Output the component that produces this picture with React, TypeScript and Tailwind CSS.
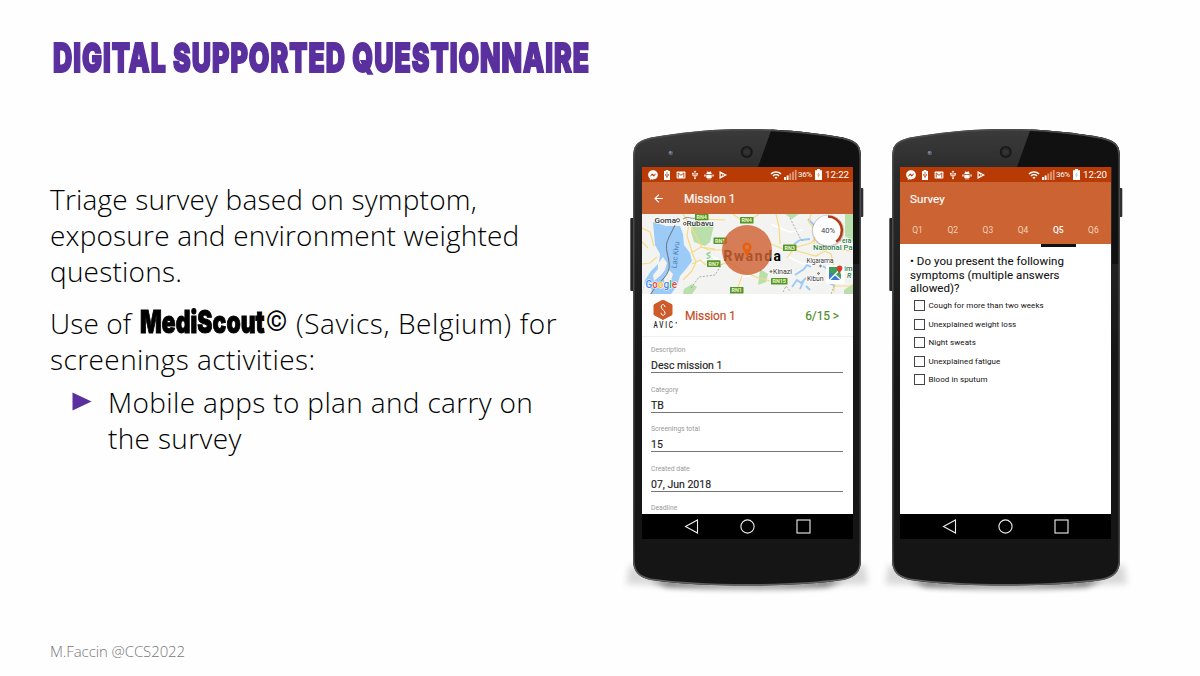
import React from "react";
import { FaFacebookMessenger } from "react-icons/fa";
import { MdUsb, MdWifi, MdArrowBack } from "react-icons/md";

function StatusBar({ time, charge }: { time: string; charge: string }) {
  return (
    <div className="flex h-[15px] shrink-0 items-center justify-between bg-[#b83a05] pl-[6px] pr-[4px] text-white">
      <div className="flex items-center gap-[4px]">
        <FaFacebookMessenger className="size-[10px]" />
        <svg className="size-[10px]" viewBox="0 0 10 10">
          <path d="M3.7 0h2.6v1H8v9H2V1h1.7z" fill="#fff" />
          <path d="M5 2v6M3.5 4v1.5L5 6.500l1.500-1V4" stroke="#b83a05" strokeWidth=".7" fill="none" />
        </svg>
        <svg className="size-[10px]" viewBox="0 0 10 10">
          <rect x=".6" y="1.400" width="8.800" height="7.200" rx=".8" fill="#fff" />
          <path d="M2.200 7.600V3L5 5.300 7.800 3V7.600" stroke="#b83a05" strokeWidth=".9" fill="none" />
        </svg>
        <MdUsb className="size-[10px]" />
        <svg className="size-[10px]" viewBox="0 0 10 10" fill="#fff">
          <path d="M2.300 4.300a2.700 2.500 0 015.400 0zM2.300 4.900h5.400v3H6.500v1.600H5.500V7.900h-1v1.600h-1V7.900H2.300zM.3 4.600h1.300v2H.3zM8.400 4.600h1.300v2H8.400z" />
          <path d="M3.200.9l.8 1.300M6.800.9L6 2.200" stroke="#fff" strokeWidth=".5" />
        </svg>
        <svg className="size-[10px]" viewBox="0 0 10 10">
          <path d="M1.500 1l7.500 4-7.500 4z" fill="#fff" />
          <path d="M2.700 3.200v3.600L5 5z" fill="#b83a05" />
          <path d="M5 5l1.500 1.400M5 5l1.500-1.400" stroke="#b83a05" strokeWidth=".5" />
        </svg>
      </div>
      <div className="flex items-center">
        <MdWifi className="size-[12px]" />
        <svg className="ml-[2px] h-[10px] w-[13px]" viewBox="0 0 13 10">
          <path d="M1 10V7M3.600 10V5.500" stroke="#fff" strokeWidth="1.900" />
          <path d="M6.300 10V3.500M9 10V1.700M11.700 10V0" stroke="#dd9878" strokeWidth="1.800" />
        </svg>
        <span className="ml-[1px] w-[15px] text-[8px] leading-none tracking-[-0.400px]">36%</span>
        <svg className="ml-[2px] h-[11px] w-[7px]" viewBox="0 0 7 11">
          <path d="M2 0h3v1.200h2V11H0V1.200h2z" fill="#fff" />
          <path d="M4.400 3L2 6.200h1.500L2.800 9 5 5.700H3.600z" fill={charge} />
        </svg>
        <span className="ml-[3px] text-[9.800px] leading-none tracking-[-0.100px]">{time}</span>
      </div>
    </div>
  );
}

function NavBar() {
  return (
    <div className="flex h-[25px] shrink-0 items-center justify-center gap-[41px] bg-black">
      <svg className="size-[15px]" viewBox="0 0 15 15" fill="none" stroke="#eee" strokeWidth="1.100">
        <path d="M13.500 1v13L1.500 7.500z" />
      </svg>
      <svg className="size-[15px]" viewBox="0 0 15 15" fill="none" stroke="#eee" strokeWidth="1.100">
        <circle cx="7.500" cy="7.500" r="6.600" />
      </svg>
      <svg className="size-[15px]" viewBox="0 0 15 15" fill="none" stroke="#eee" strokeWidth="1.100">
        <rect x="1" y="1" width="13" height="13" />
      </svg>
    </div>
  );
}

function PhoneBody({ id }: { id: string }) {
  const outline =
    "M6 36C6 21 9 17.500 24 13.500C58 7.500 90 5 120 5S182 7.500 216 13.500C231 17.500 234 21 234 36V436C234 448 228 453.500 216 456C185 460.500 150 461.500 120 461.500S55 460.500 24 456C12 453.500 6 448 6 436Z";
  return (
    <svg className="absolute inset-0 h-full w-full" viewBox="0 0 240 476" overflow="visible">
      <defs>
        <linearGradient id={id + "g"} x1="0" y1="0" x2="0" y2="1">
          <stop offset="0" stopColor="#3b3b3b" />
          <stop offset=".1" stopColor="#2b2b2b" />
          <stop offset=".5" stopColor="#171717" />
          <stop offset="1" stopColor="#151515" />
        </linearGradient>
        <linearGradient id={id + "e"} x1="0" y1="0" x2="0" y2="1">
          <stop offset="0" stopColor="#4c4c4c" />
          <stop offset=".9" stopColor="#444" />
          <stop offset="1" stopColor="#606060" />
        </linearGradient>
        <clipPath id={id + "c"}>
          <path d={outline} />
        </clipPath>
        <filter id={id + "b"} x="-20%" y="-100%" width="140%" height="300%">
          <feGaussianBlur stdDeviation="3" />
        </filter>
      </defs>
      <path d="M3 440C30 455 210 455 238 440L241 460Q120 465 -1 460Z" fill="#777" opacity=".28" filter={"url(#" + id + "b)"} />
      <path d="M24 456Q120 467 216 456L200 462Q120 466 40 462Z" fill="#111" opacity=".75" filter={"url(#" + id + "b)"} />
      <rect x="3.300" y="94" width="4" height="73" rx="1" fill="#252525" />
      <rect x="233" y="64" width="3.300" height="29" rx="1" fill="#303030" />
      <path d={outline} fill={"url(#" + id + "g)"} />
      <g clipPath={"url(#" + id + "c)"}>
        <path d="M146.500 0H240V140H226V43H131Z" fill="#111" />
        <path d={outline} fill="none" stroke={"url(#" + id + "e)"} strokeWidth="3" />
      </g>
      <circle cx="119.700" cy="28" r="5.300" fill="#262626" stroke="#161616" strokeWidth="1.300" />
      <circle cx="119.700" cy="28" r="3" fill="#333" />
      <circle cx="43.700" cy="29" r="2.300" fill="#59606e" />
      <circle cx="43.200" cy="28.300" r="1" fill="#8b93a8" />
    </svg>
  );
}

function Phone({ id, inset, children }: { id: string; inset: string; children: React.ReactNode }) {
  return (
    <div className={"relative h-[476px] w-[240px] shrink-0 pt-[43px] " + inset}>
      <PhoneBody id={id} />
      <div className="relative flex h-[372px] w-[211px] flex-col overflow-hidden bg-white font-[Roboto,sans-serif]">
        {children}
        <NavBar />
      </div>
    </div>
  );
}

function RoadTag({ x, y, t }: { x: number; y: number; t: string }) {
  const w = t.length > 3 ? 16.5 : 13.5;
  return (
    <g>
      <rect x={x} y={y} width={w} height="6.600" rx=".5" fill="#55962b" />
      <text x={x + w / 2} y={y + 5.3} fontSize="5.400" fontWeight="700" fill="#f4f7c8" textAnchor="middle">
        {t}
      </text>
    </g>
  );
}

function RwandaMap() {
  return (
    <svg className="h-[80px] w-[211px] shrink-0" viewBox="0 0 211 80" fontFamily="Roboto, sans-serif">
      <rect width="211" height="80" fill="#f3f4f2" />
      <path d="M50 8L57 5 72 11 68 28 63 32 52 28 49 18ZM42 75L50 70 55 73 50 80H41ZM143 0H157L150 5ZM203 0H211V28L203 22ZM202 76L211 70V80H202ZM118 55l8 5-2 8-8 3z" fill="#b9dfaa" />
      <path d="M11 8L24 12 38 12 41 20 42 31 48 39 50 47 44 55 38 62 35 72 29 80H0L3 66 9 57 17 49 18 40 13 31 12 20Z" fill="#9ccbf8" />
      <path d="M21 43L25 49 23 56 19 61 12 67 11 61 16 55 16 50ZM27 56L31 60 28 70 23 75 22 65ZM0 80L3 68 10 76 8 80Z" fill="#f3f4f2" />
      <path d="M150 73l5-7 4 3 5-5M153 61l9-6 3-4 4 2M181 52l7 5 2 9M166 5l7 7 5 2M164 72l4 4M190 22l9 5M152 30l6-4 10-1M185 68l8 4M158 75l4-9" stroke="#9bc9f6" strokeWidth="1.800" fill="none" />
      <g fill="none" stroke="#fff" strokeWidth="1.500">
        <path d="M56 50l14-8 9 5M94 80l5-16 18-5M145 42l16 8 16-2M62 0l-5 13M129 10l18 8 14-2" />
      </g>
      <g fill="none" stroke="#f7d982" strokeWidth="1.200">
        <path d="M41 0l6 9-2 13 3 9 3 10 3 7-4 9-9 9M47 9l13 24 7 3 13 0M49 39l10-6 14 2M50 50l8-4 6 5M78 51l8-3 14 9 14 6 14 4M100 62l-4 11M91 0l8 6 8 1 10-7M127 29l14 6 14-2 14-4 10-11M134 0l3 13 1 17M169 0l-2 8 6 8-1 16 17 8 4 16-1 22M145 44l8-11M193 72h18M155 37l19 5 14-8 21 3M0 14l8 4 4 14M0 50l8-1 7-6M0 28l6 6M58 0l3 5 22 1" />
      </g>
      <path d="M33 11C26 26 23 28 25 38S30 55 22 64 11 76 9 80" fill="none" stroke="#666" strokeWidth=".9" />
      <path d="M49 74l8-11 16-2 7-11M141 78l3-6 4 5M148 4l10 20 4 4M198 55l-5 15-4 10" fill="none" stroke="#999" strokeWidth=".8" strokeDasharray="2 1.500" />
      <path d="M41 5C49 0 49 9 57 1" fill="none" stroke="#777" strokeWidth=".8" />
      <RoadTag x={53} y={-0.3} t="RN4" />
      <RoadTag x={98} y={3} t="RN4" />
      <RoadTag x={71.5} y={23.5} t="RN1" />
      <RoadTag x={141} y={30.5} t="RN3" />
      <RoadTag x={65} y={46.3} t="RN7" />
      <RoadTag x={129} y={64} t="RN15" />
      <RoadTag x={88} y={73} t="RN1" />
      <path d="M68.500 38.500q-6 1-2 3t-2 3" stroke="#8dcf90" strokeWidth="1.300" fill="none" />
      <g fill="#333" fontSize="7.800" fontWeight="500" stroke="#fff" strokeWidth="1.200" paintOrder="stroke">
        <text x="12.500" y="9" textLength="21.500" lengthAdjust="spacingAndGlyphs">Goma</text>
        <text x="44.500" y="12.300" textLength="27" lengthAdjust="spacingAndGlyphs">Rubavu</text>
        <text x="131" y="60" textLength="19" lengthAdjust="spacingAndGlyphs" fontWeight="400">Kinazi</text>
        <text x="164.500" y="48.500" fontSize="7" fontWeight="400" textLength="27">Kigarama</text>
        <text x="165" y="67" fontSize="7" fontWeight="400" textLength="16.500">Kibun</text>
        <text x="171" y="36" fill="#2c8045" fontSize="7.600" textLength="39.500" lengthAdjust="spacingAndGlyphs">National Pa</text>
        <text x="200" y="28.500" fill="#2c8045" fontSize="7.400" textLength="9.500">era</text>
        <text x="202" y="56.500" fill="#2c8045" fontSize="7.400" textLength="8.500" lengthAdjust="spacingAndGlyphs">im</text>
        <text x="205" y="64" fill="#2c8045" fontSize="7" fontStyle="italic">R</text>
        <text transform="translate(34.500 54.500) rotate(-84)" fill="#4f83b8" fontSize="7.500" fontWeight="400" stroke="none" textLength="27">Lac Kivu</text>
      </g>
      <g fill="#fff" stroke="#444" strokeWidth=".9">
        <circle cx="36" cy="6.300" r="1.600" />
        <circle cx="42.800" cy="9.700" r="1.300" />
        <circle cx="129" cy="57.500" r=".8" />
        <circle cx="178.500" cy="52" r=".8" />
        <circle cx="176.500" cy="59.500" r=".8" />
      </g>
      <text x="81.500" y="46.700" fontSize="13.800" fontWeight="700" textLength="57.500" fill="#000">
        Rwanda
      </text>
      <circle cx="105" cy="36" r="25" fill="#cf6233" opacity=".82" />
      <circle cx="105" cy="33.200" r="3.400" fill="none" stroke="#e5600f" strokeWidth="2.500" />
      <path d="M101.500 36.200h7C107 39 105.500 41 105 44.500 104.500 41 103 39 101.500 36.200Z" fill="#e5600f" />
      <text x="3.500" y="74" fontSize="11" fontWeight="500" textLength="31.500" lengthAdjust="spacingAndGlyphs" stroke="#fff" strokeWidth="1.200" paintOrder="stroke">
        <tspan fill="#4285f4">G</tspan>
        <tspan fill="#ea4335">o</tspan>
        <tspan fill="#fbbc05">o</tspan>
        <tspan fill="#4285f4">g</tspan>
        <tspan fill="#34a853">l</tspan>
        <tspan fill="#ea4335">e</tspan>
      </text>
      <rect x="184" y="51" width="18.500" height="19" fill="#fff" opacity=".92" />
      <path d="M187 53h10l2 8v5h-12z" fill="#3f9f5b" />
      <path d="M187 59v7l5-6zM188.500 66l5-5 5 5z" fill="#3c78d8" />
      <path d="M187 66.500l9-9M193 60.500l6 5.500" stroke="#fff" strokeWidth="1.200" fill="none" />
      <path d="M197.500 60C197 57 194.800 56.500 194.800 54.200A2.800 2.800 0 01200.400 54.200C200.400 56.500 198 57 197.500 60Z" fill="#d93a2e" />
      <circle cx="186" cy="17" r="16.200" fill="#555" opacity=".25" />
      <circle cx="186" cy="16.500" r="15" fill="#fff" />
      <path d="M186 2.500A14 14 0 01194.200 27.800" fill="none" stroke="#b83a12" strokeWidth="2.600" />
      <text x="186" y="19.300" fontSize="7.600" textAnchor="middle" fill="#444">
        40%
      </text>
    </svg>
  );
}

function SavicsLogo() {
  return (
    <svg className="h-[32px] w-[26px]" viewBox="0 0 26 32" fontFamily="Roboto, sans-serif">
      <path d="M12 0L21 4.800V14.700L12 19.500 3 14.700V4.800Z" fill="#cd5c2a" stroke="#cd5c2a" strokeWidth="1" strokeLinejoin="round" />
      <path d="M14 7C13.600 3.500 10 4 10.200 7S14 10 14 13 10.200 16 10 12.800" fill="none" stroke="#fff" strokeWidth="1" />
      <g transform="translate(2.500 28) scale(.72 1)">
        <text fontSize="8.800" fill="#222" textLength="27" fontWeight="500">
          AVIC
        </text>
      </g>
      <path d="M25.200 22v1.500" stroke="#222" />
    </svg>
  );
}

const fields = [
  ["Description", "Desc mission 1"],
  ["Category", "TB"],
  ["Screenings total", "15"],
  ["Created date", "07, Jun 2018"],
];

function MissionScreen() {
  return (
    <>
      <StatusBar time="12:22" charge="#d9925f" />
      <div className="flex h-[32px] shrink-0 items-center bg-[#cc6332] pl-[10px] pt-[1px] text-white">
        <MdArrowBack className="size-[13px]" />
        <span className="ml-[19px] text-[12px] leading-none tracking-[-0.050px] [-webkit-text-stroke:0.150px_#fff]">Mission 1</span>
      </div>
      <RwandaMap />
      <div className="flex h-[43px] shrink-0 items-center border-b border-[#f0f0f0] pl-[9px] pr-[14px] pt-[2px]">
        <SavicsLogo />
        <span className="ml-[8px] text-[12px] tracking-[-0.150px] text-[#c4491d] [-webkit-text-stroke:0.150px_#c4491d]">Mission 1</span>
        <span className="ml-auto text-[12px] tracking-[-0.100px] text-[#4b8b1c] [-webkit-text-stroke:0.150px_#4b8b1c]">6/15 &gt;</span>
      </div>
      <div className="flex min-h-0 flex-1 flex-col overflow-hidden pl-[9px] pr-[10px] pt-[8px] leading-none">
        {fields.map(([label, value]) => (
          <div key={label} className="mb-[11.600px] flex h-[28px] shrink-0 flex-col justify-between border-b border-[#777]">
            <span className="pt-[1px] text-[6.800px] leading-[9px] text-[#999]">{label}</span>
            <span className="text-[10.500px] leading-[13px] text-[#222] [-webkit-text-stroke:0.150px_#222]">{value}</span>
          </div>
        ))}
        <span className="pt-[1px] text-[6.800px] leading-[9px] text-[#999]">Deadline</span>
      </div>
    </>
  );
}

const tabs = ["Q1", "Q2", "Q3", "Q4", "Q5", "Q6"];
const symptoms = [
  "Cough for more than two weeks",
  "Unexplained weight loss",
  "Night sweats",
  "Unexplained fatigue",
  "Blood in sputum",
];

function SurveyScreen() {
  return (
    <>
      <StatusBar time="12:20" charge="#a9c3e0" />
      <div className="flex h-[62px] shrink-0 flex-col bg-[#cc6332] text-white">
        <span className="pl-[10px] pt-[10px] text-[11.700px] leading-[14px] [-webkit-text-stroke:0.150px_#fff]">Survey</span>
        <div className="mt-auto grid h-[28px] grid-cols-6">
          {tabs.map((tab) => (
            <span
              key={tab}
              className={
                tab === "Q5"
                  ? "border-b-[3px] border-[#111] text-center text-[8.500px] leading-[28px] font-medium"
                  : "text-center text-[8.500px] leading-[28px] text-[#f3d4b8]"
              }
            >
              {tab}
            </span>
          ))}
        </div>
      </div>
      <div className="flex-1 pl-[10px] pt-[11px] text-[#111]">
        <div className="text-[11.500px] leading-[13.700px] tracking-[0.060px] [-webkit-text-stroke:0.080px_#111]">
          • Do you present the following
          <br />
          symptoms (multiple answers
          <br />
          allowed)?
        </div>
        <div className="flex flex-col pl-[4px]">
          {symptoms.map((symptom) => (
            <label key={symptom} className="flex h-[18.600px] items-center gap-[3.500px] text-[8px] leading-none tracking-[0.070px]">
              <span className="size-[11px] border border-[#444]" />
              <span className="pt-[1px]">{symptom}</span>
            </label>
          ))}
        </div>
      </div>
    </>
  );
}

export default function App() {
  return (
    <main className="flex h-[676px] w-[1200px] overflow-hidden bg-[#fefefe] font-['Open_Sans',sans-serif] text-black">
      <section className="flex w-[627px] shrink-0 flex-col pl-[50px]">
        <h1 className="ml-[3px] mt-[33px] h-[50px] w-max origin-left scale-x-[0.665] whitespace-nowrap font-[Inter,sans-serif] text-[40px] font-black leading-[50px] tracking-[1.500px] text-[#5a2f9e] [-webkit-text-stroke:1.800px_#5a2f9e]">
          DIGITAL SUPPORTED QUESTIONNAIRE
        </h1>
        <div className="mt-[98px] whitespace-nowrap text-[28px] font-light leading-[36px]">
          <p>
            <span className="block tracking-[0.200px]">Triage survey based on symptom,</span>
            <span className="block tracking-[0.180px]">exposure and environment weighted</span>
            <span className="block tracking-[0.210px]">questions.</span>
          </p>
          <div className="mt-[16px] flex">
            <span className="w-[90px] tracking-[0.100px]">Use of</span>
            <span className="flex w-[156px]">
              <strong className="w-[126px] origin-left scale-x-[0.735] font-[Inter,sans-serif] text-[31px] font-black leading-[34px] tracking-[0.100px] [-webkit-text-stroke:1px_#000]">
                MediScout
              </strong>
              <span className="font-[Roboto,sans-serif] text-[27px] font-medium leading-[34px]">©</span>
            </span>
            <span className="tracking-[0.600px]">(Savics, Belgium) for</span>
          </div>
          <p className="tracking-[0.430px]">screenings activities:</p>
          <div className="mt-[7px] flex pl-[22px]">
            <svg className="mt-[8px] h-[19px] w-[20px]" viewBox="0 0 20 19">
              <path d="M.5.500L19.500 9.500.5 18.500Z" fill="#5a2f9e" />
            </svg>
            <p className="ml-[16px]">
              <span className="block tracking-[0.350px]">Mobile apps to plan and carry on</span>
              <span className="block tracking-[0.350px]">the survey</span>
            </p>
          </div>
        </div>
        <footer className="mb-[13px] mt-auto text-[15px] font-light leading-[24px] tracking-[-0.100px] text-[#777]">M.Faccin @CCS2022</footer>
      </section>
      <section className="flex gap-[19px] pt-[124px]">
        <Phone id="mission" inset="pl-[15px]">
          <MissionScreen />
        </Phone>
        <Phone id="survey" inset="pl-[14px]">
          <SurveyScreen />
        </Phone>
      </section>
    </main>
  );
}
